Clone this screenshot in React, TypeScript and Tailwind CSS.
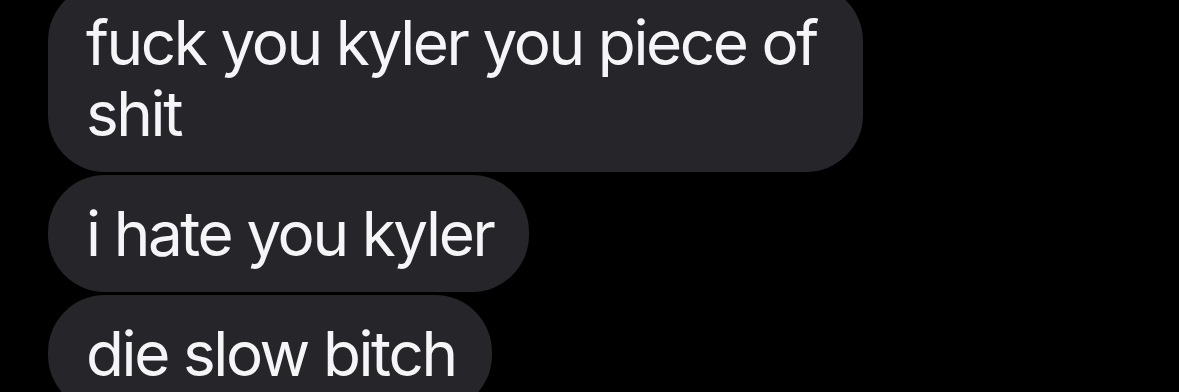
import React from "react";

const messages = [
  "fuck you kyler you piece of shit",
  "i hate you kyler",
  "die slow bitch",
];

export default function App() {
  return (
    <div className="h-[392px] w-[1179px] overflow-hidden bg-black">
      <div className="-mt-[16px] flex flex-col items-start gap-[3px] pl-[48px]">
        {messages.map((text, i) => (
          <div
            key={i}
            className="max-w-[815px] rounded-[57px] bg-[#26262a] pl-[38px] pr-[36px] py-[23px] text-[62px] leading-[71px] tracking-[-2.4px] text-[#f5f5f7] [font-family:Inter,'Noto_Sans',sans-serif]"
          >
            {text}
          </div>
        ))}
      </div>
    </div>
  );
}
